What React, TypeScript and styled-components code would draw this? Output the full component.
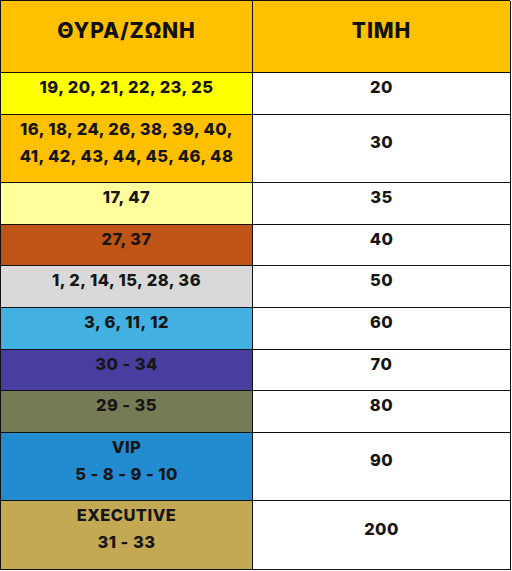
import styled, { createGlobalStyle } from "styled-components";
import { Fragment } from "react";

const GlobalStyle = createGlobalStyle`
  html, body {
    margin: 0;
    padding: 0;
    background: #ffffff;
  }
  body {
    font-family: Inter, "Liberation Sans", sans-serif;
  }
`;

type Row = {
  zones: string[];
  price: string;
  color: string;
};

const rows: Row[] = [
  { zones: ["19, 20, 21, 22, 23, 25"], price: "20", color: "#ffff00" },
  { zones: ["16, 18, 24, 26, 38, 39, 40,", "41, 42, 43, 44, 45, 46, 48"], price: "30", color: "#ffc000" },
  { zones: ["17, 47"], price: "35", color: "#ffff9c" },
  { zones: ["27, 37"], price: "40", color: "#c05417" },
  { zones: ["1, 2, 14, 15, 28, 36"], price: "50", color: "#d9d9d9" },
  { zones: ["3, 6, 11, 12"], price: "60", color: "#42b0e0" },
  { zones: ["30 - 34"], price: "70", color: "#483ea0" },
  { zones: ["29 - 35"], price: "80", color: "#767b56" },
  { zones: ["VIP", "5 - 8 - 9 - 10"], price: "90", color: "#238bd0" },
  { zones: ["EXECUTIVE", "31 - 33"], price: "200", color: "#c4a955" },
];

const Table = styled.div`
  display: grid;
  grid-template-columns: 252px 258px;
  width: 510px;
  border-left: 1px solid #111;
  border-top: 1px solid #111;
  box-sizing: border-box;
`;

const HeadCell = styled.div`
  background: #ffc000;
  height: 72px;
  padding-top: 16px;
  box-sizing: border-box;
  border-right: 1px solid #111;
  border-bottom: 1px solid #111;
  text-align: center;
  font-size: 21px;
  line-height: 28px;
  font-weight: 800;
  letter-spacing: 0.9px;
  color: #111;
`;

const Cell = styled.div<{ $bg: string }>`
  background: ${(p) => p.$bg};
  padding: 1px 0 12.6px;
  border-right: 1px solid #111;
  border-bottom: 1px solid #111;
  display: flex;
  flex-direction: column;
  justify-content: center;
  text-align: center;
  font-size: 16.5px;
  line-height: 27px;
  font-weight: 800;
  letter-spacing: 0.45px;
  color: #161616;
`;

function App() {
  return (
    <>
      <GlobalStyle />
      <Table>
        <HeadCell>ΘΥΡΑ/ΖΩΝΗ</HeadCell>
        <HeadCell>ΤΙΜΗ</HeadCell>
        {rows.map((r) => (
          <Fragment key={r.price}>
            <Cell $bg={r.color}>
              {r.zones.map((z) => (
                <div key={z}>{z}</div>
              ))}
            </Cell>
            <Cell $bg="#ffffff">{r.price}</Cell>
          </Fragment>
        ))}
      </Table>
    </>
  );
}

export default App;
